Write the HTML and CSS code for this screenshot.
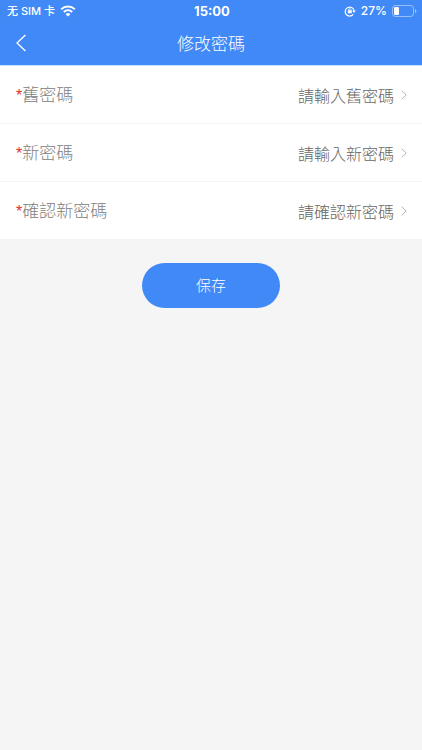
FILE: index.html
```html
<!DOCTYPE html>
<html lang="zh-Hant">
<head>
<meta charset="utf-8">
<meta name="viewport" content="width=device-width, initial-scale=1">
<title>修改密碼</title>
<link rel="stylesheet" href="styles.css">
</head>
<body>
<header class="header">
  <div class="status">
    <div class="status-side">
      <span class="carrier">无 SIM 卡</span>
      <svg class="wifi" viewBox="0 0 16 12" aria-hidden="true">
        <path d="M1.2 4.2a10 10 0 0 1 13.6 0M3.8 7a6.2 6.2 0 0 1 8.4 0" fill="none" stroke="currentColor" stroke-width="2"/>
        <path d="M8 11.6 5.6 9.2a3.5 3.5 0 0 1 4.8 0z" fill="currentColor"/>
      </svg>
    </div>
    <span class="clock">15:00</span>
    <div class="status-side status-right">
      <svg class="lock" viewBox="0 0 12 12" aria-hidden="true">
        <path d="M9.2 9.4A4.5 4.5 0 1 1 10.1 5.6" fill="none" stroke="currentColor" stroke-width="1.2"/>
        <path d="M8.2 5.4h3.6L10 7.9z" fill="currentColor"/>
        <rect x="3.8" y="5.3" width="4" height="3" rx=".5" fill="currentColor"/>
        <path d="M4.6 5.6V4.8a1.2 1.2 0 0 1 2.4 0v.8" fill="none" stroke="currentColor" stroke-width=".8"/>
      </svg>
      <span class="percent">27%</span>
      <svg class="battery" viewBox="0 0 25 12" aria-hidden="true">
        <rect x=".5" y=".5" width="21" height="11" rx="3" fill="none" stroke="currentColor" opacity=".45"/>
        <rect x="2" y="2" width="5" height="8" rx="1.2" fill="currentColor"/>
        <path d="M23 4v4q1.4-.6 1.4-2T23 4z" fill="currentColor" opacity=".5"/>
      </svg>
    </div>
  </div>
  <div class="navbar">
    <button class="back" type="button" aria-label="返回">
      <svg viewBox="0 0 10 18" aria-hidden="true"><path d="M9.4 1 1 9l8.4 8" fill="none" stroke="currentColor" stroke-width="1.3"/></svg>
    </button>
    <h1 class="title">修改密碼</h1>
  </div>
</header>
<form class="form">
  <div class="row">
    <label class="label" for="old"><span class="required">*</span>舊密碼</label>
    <input class="field" id="old" type="password" placeholder="請輸入舊密碼">
    <svg class="chevron" viewBox="0 0 6 10" aria-hidden="true"><path d="m.7.7 4.5 4.3L.7 9.3" fill="none" stroke="currentColor"/></svg>
  </div>
  <div class="row">
    <label class="label" for="new"><span class="required">*</span>新密碼</label>
    <input class="field" id="new" type="password" placeholder="請輸入新密碼">
    <svg class="chevron" viewBox="0 0 6 10" aria-hidden="true"><path d="m.7.7 4.5 4.3L.7 9.3" fill="none" stroke="currentColor"/></svg>
  </div>
  <div class="row">
    <label class="label" for="confirm"><span class="required">*</span>確認新密碼</label>
    <input class="field" id="confirm" type="password" placeholder="請確認新密碼">
    <svg class="chevron" viewBox="0 0 6 10" aria-hidden="true"><path d="m.7.7 4.5 4.3L.7 9.3" fill="none" stroke="currentColor"/></svg>
  </div>
  <button class="save" type="button">保存</button>
</form>
</body>
</html>
```
FILE: styles.css
```css
* {
  box-sizing: border-box;
}

body {
  margin: 0;
  background: #f5f5f5;
  font-family: "Noto Sans CJK TC", sans-serif;
  font-weight: 300;
}

.header {
  background: #4089f7;
  color: #fff;
  border-bottom: 1px solid #c4e0fc;
}

.status {
  display: grid;
  grid-template-columns: 1fr auto 1fr;
  align-items: center;
  height: 21px;
  padding: 0 5px 0 7px;
  font-family: Inter, "Noto Sans CJK SC", sans-serif;
  font-size: 12px;
  font-weight: 500;
  line-height: 20px;
}

.status-side {
  display: flex;
  align-items: center;
  gap: 5px;
}

.status-right {
  justify-content: flex-end;
}

.carrier {
  font-size: 11px;
}

.clock {
  font-size: 13px;
  font-weight: 700;
}

.wifi {
  width: 16px;
  height: 12px;
}

.lock {
  width: 12px;
  height: 12px;
}

.battery {
  width: 25px;
  height: 12px;
}

.navbar {
  display: grid;
  grid-template-columns: 44px 1fr 44px;
  align-items: center;
  height: 44px;
}

.back {
  display: flex;
  align-items: center;
  height: 44px;
  padding: 0 16px;
  border: 0;
  background: none;
  color: inherit;
}

.back svg {
  width: 10px;
  height: 18px;
}

.title {
  margin: 0;
  font-size: 17px;
  font-weight: 300;
  line-height: 44px;
  text-align: center;
}

.row {
  display: flex;
  align-items: center;
  height: 58px;
  padding: 0 15px 0 16px;
  border-bottom: 1px solid #f3f3f3;
  background: #fff;
}

.label {
  color: #808080;
  font-size: 17px;
  line-height: 24px;
}

.required {
  color: #e0322f;
  font-family: "Liberation Sans", sans-serif;
  font-size: 16px;
  font-weight: 400;
}

.field {
  flex: 1;
  min-width: 0;
  padding: 0;
  border: 0;
  outline: 0;
  background: none;
  color: #333;
  font: inherit;
  font-size: 16px;
  line-height: 24px;
  text-align: right;
}

.field::placeholder {
  color: #666;
  opacity: 1;
}

.chevron {
  width: 6px;
  height: 10px;
  margin-left: 7px;
  color: #b5b5b5;
}

.save {
  display: block;
  width: 138px;
  height: 45px;
  margin: 23px auto;
  padding: 0 0 2px;
  border: 0;
  border-radius: 23px;
  background: #4089f7;
  color: #fff;
  font: inherit;
  font-size: 15px;
}
```
